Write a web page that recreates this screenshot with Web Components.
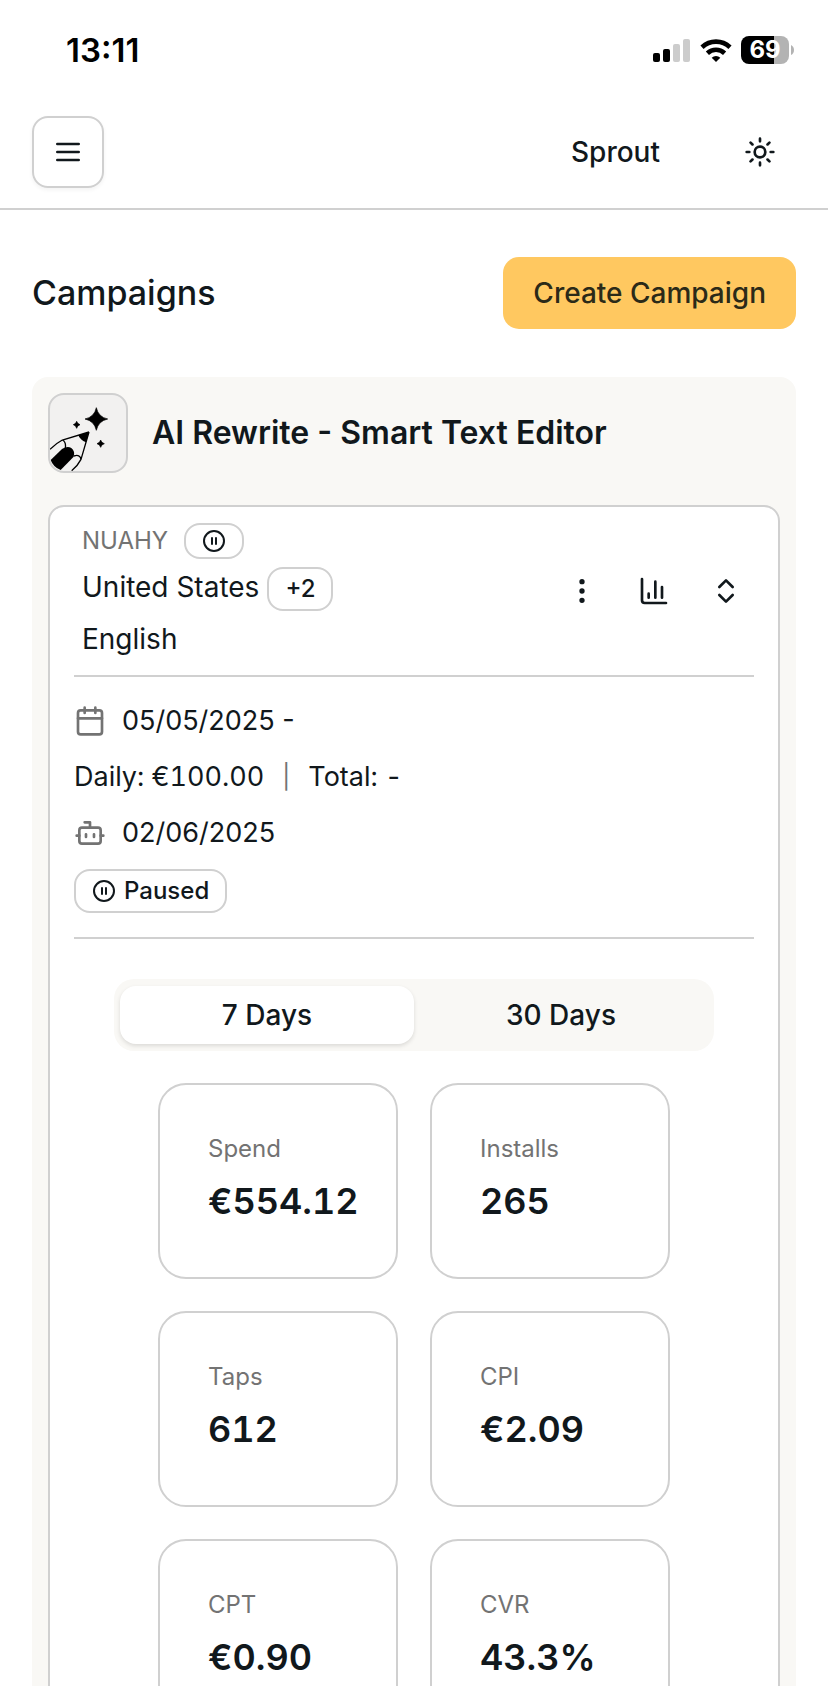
<!DOCTYPE html>
<html lang="en">
<head>
<meta charset="utf-8">
<meta name="viewport" content="width=device-width, initial-scale=1">
<title>Campaigns</title>
<style>
  :root {
    --ink: #11181c;
    --muted: #737373;
    --line: #d0d0d0;
    --panel: #f9f8f5;
    --accent: #ffc860;
  }
  html, body { height: 100%; }
  body {
    margin: 0;
    background: #fff;
    color: var(--ink);
    font: 400 28px/40px Inter, "Liberation Sans", sans-serif;
  }
</style>
</head>
<body>
<app-shell>
  <status-bar slot="top" time="13:11" battery="69"></status-bar>
  <app-header slot="top" workspace="Sprout"></app-header>
  <page-title>Campaigns<span slot="action">Create Campaign</span></page-title>
  <app-group name="AI Rewrite - Smart Text Editor">
    <campaign-card>
      <campaign-summary code="NUAHY" country="United States" more="+2" language="English"></campaign-summary>
      <campaign-details></campaign-details>
      <range-tabs></range-tabs>
      <metric-grid>
        <metric-card label="Spend">€554.12</metric-card>
        <metric-card label="Installs">265</metric-card>
        <metric-card label="Taps">612</metric-card>
        <metric-card label="CPI">€2.09</metric-card>
        <metric-card label="CPT">€0.90</metric-card>
        <metric-card label="CVR">43.3%</metric-card>
      </metric-grid>
    </campaign-card>
  </app-group>
</app-shell>

<script>
const base = `
  :host, *, *::before, *::after { box-sizing: border-box; }
  button { margin: 0; padding: 0; border: 0; background: none; color: inherit; font: inherit; cursor: pointer; }
`;

function define(name, render) {
  customElements.define(name, class extends HTMLElement {
    constructor() {
      super();
      this.attachShadow({ mode: 'open' });
    }
    connectedCallback() {
      const t = document.createElement('template');
      t.innerHTML = `<style>${base}</style>` + render(this);
      this.shadowRoot.replaceChildren(t.content.cloneNode(true));
    }
  });
}

const glyphs = {
  menu: '<path d="M4 6h16M4 12h16M4 18h16"/>',
  sun: '<circle cx="12" cy="12" r="4"/><path d="M12 2v2M12 20v2M4.93 4.93l1.41 1.41M17.66 17.66l1.41 1.41M2 12h2M20 12h2M6.34 17.66l-1.41 1.41M19.07 4.93l-1.41 1.41"/>',
  pause: '<circle cx="12" cy="12" r="10"/><path d="M10 15V9M14 15V9"/>',
  more: '<circle cx="12" cy="12" r="1"/><circle cx="12" cy="5" r="1"/><circle cx="12" cy="19" r="1"/>',
  chart: '<path d="M3 3v16a2 2 0 0 0 2 2h16M18 17V9M13 17V5M8 17v-3"/>',
  updown: '<path d="m7 15 5 5 5-5M7 9l5-5 5 5"/>',
  calendar: '<path d="M8 2v4M16 2v4M3 10h18"/><rect width="18" height="18" x="3" y="4" rx="2"/>',
  bot: '<path d="M12 8V4H8M2 14h2M20 14h2M15 13v2M9 13v2"/><rect width="16" height="12" x="4" y="8" rx="2"/>'
};

define('ui-icon', el => `
  <style>
    :host { display: block; flex: none; width: 32px; height: 32px; }
    :host([small]) { width: 24px; height: 24px; }
    svg { display: block; width: 100%; height: 100%; }
  </style>
  <svg viewBox="0 0 24 24" fill="none" stroke="currentColor" stroke-width="2" stroke-linecap="round" stroke-linejoin="round" aria-hidden="true">${glyphs[el.getAttribute('name')]}</svg>
`);

define('ui-badge', () => `
  <style>
    :host {
      display: inline-flex; align-items: center; justify-content: center; gap: 8px;
      height: 44px; padding: 0 16px; border: 2px solid var(--line); border-radius: 16px;
      font-size: 24px; font-weight: 500; line-height: 40px;
    }
    :host([compact]) { height: 36px; }
  </style>
  <slot></slot>
`);

define('status-bar', el => `
  <style>
    :host {
      display: flex; align-items: center; justify-content: space-between;
      height: 96px; padding: 4px 34px 0 66px; color: #000;
    }
    time { font-size: 33px; font-weight: 600; }
    .status { display: flex; align-items: center; gap: 8px; }
    svg { display: block; }
    .battery { display: flex; align-items: center; gap: 2px; }
    .level {
      display: grid; place-items: center; width: 48px; height: 28px; border-radius: 8px;
      background: linear-gradient(90deg, #000 69%, #b3b3b3 69%);
      color: #fff; font-size: 24px; font-weight: 700; line-height: 28px;
    }
  </style>
  <time>${el.getAttribute('time')}</time>
  <div class="status">
    <svg width="38" height="24" viewBox="0 0 38 24" aria-hidden="true">
      <rect x="0" y="15" width="7" height="9" rx="2"/>
      <rect x="10" y="11" width="7" height="13" rx="2"/>
      <rect x="20" y="6" width="7" height="18" rx="2" fill="#ccc"/>
      <rect x="30" y="1" width="7" height="23" rx="2" fill="#ccc"/>
    </svg>
    <svg width="34" height="24" viewBox="0 0 34 24" fill="none" stroke="#000" stroke-width="4.6" aria-hidden="true">
      <path d="M3 9.2a20.5 20.5 0 0 1 28 0"/>
      <path d="M8.4 15.2a12.6 12.6 0 0 1 17.2 0"/>
      <path d="M17 24l-4.3-4.3a6.2 6.2 0 0 1 8.6 0z" fill="#000" stroke="none"/>
    </svg>
    <div class="battery">
      <span class="level">${el.getAttribute('battery')}</span>
      <svg width="3" height="10" viewBox="0 0 3 10" fill="#b3b3b3" aria-hidden="true"><path d="M0 0q3 1.5 3 5t-3 5z"/></svg>
    </div>
  </div>
`);

define('app-header', el => `
  <style>
    :host {
      display: flex; align-items: center; justify-content: space-between;
      padding: 20px 32px; border-bottom: 2px solid var(--line);
    }
    button { display: grid; place-items: center; height: 72px; }
    .menu { width: 72px; border: 2px solid var(--line); border-radius: 16px; box-shadow: 0 2px 4px #0000000d; }
    .side { display: flex; align-items: center; gap: 32px; }
    .workspace { padding: 0 32px; font-weight: 500; }
    .theme { width: 72px; }
  </style>
  <button class="menu" aria-label="Open menu"><ui-icon name="menu"></ui-icon></button>
  <div class="side">
    <button class="workspace">${el.getAttribute('workspace')}</button>
    <button class="theme" aria-label="Toggle theme"><ui-icon name="sun"></ui-icon></button>
  </div>
`);

define('app-shell', () => `
  <style>
    :host { display: flex; flex-direction: column; height: 100%; }
    main { flex: 1; min-height: 0; overflow-y: auto; scrollbar-width: none; padding: 47px 32px 32px; }
  </style>
  <slot name="top"></slot>
  <main><slot></slot></main>
`);

define('page-title', () => `
  <style>
    :host { display: flex; align-items: center; justify-content: space-between; margin-bottom: 48px; }
    h1 { margin: 0; font-size: 34px; font-weight: 500; line-height: 40px; }
    button { height: 72px; padding: 0 30px; border-radius: 16px; background: var(--accent); color: #2b2a18; font-weight: 500; }
  </style>
  <h1><slot></slot></h1>
  <button><slot name="action"></slot></button>
`);

define('app-group', el => `
  <style>
    :host { display: block; padding: 16px; border-radius: 16px; background: var(--panel); }
    header { display: flex; align-items: center; gap: 24px; margin-bottom: 32px; }
    h2 { margin: 0; font-size: 32px; font-weight: 600; line-height: 40px; }
    .logo { flex: none; width: 80px; height: 80px; border: 2px solid var(--line); border-radius: 16px; overflow: hidden; background: #f2f1f0; }
    svg { display: block; width: 100%; height: 100%; }
  </style>
  <header>
    <div class="logo">
      <svg viewBox="150 495 228 228" aria-hidden="true">
        <path d="M289 533q6 28 34 34q-28 6-34 34q-6-28-34-34q28-6 34-34z" stroke="#000" stroke-width="2"/>
        <path d="M230 574q2 8 10 10q-8 2-10 11q-2-9-10-11q8-2 10-10zM302 630q2 9 11 11q-9 2-11 11q-2-9-11-11q9-2 11-11z" stroke="#000" stroke-width="2"/>
        <path d="M267 606L187 630Q168 640 150 658M267 606L243 688Q234 706 215 722M187 630Q199 636 196 655M222 678Q240 672 243 688" fill="none" stroke="#000" stroke-width="4"/>
        <path d="M267 606L235 616Q240 630 258 637z"/>
        <path d="M152 690L186 657Q202 646 214 654Q226 664 221 680L182 720Q160 712 152 690z"/>
      </svg>
    </div>
    <h2>${el.getAttribute('name')}</h2>
  </header>
  <slot></slot>
`);

define('campaign-card', () => `
  <style>
    :host { display: block; padding: 16px 24px 40px; border: 2px solid var(--line); border-radius: 16px; background: #fff; }
  </style>
  <slot></slot>
`);

define('campaign-summary', el => `
  <style>
    :host { display: flex; align-items: center; justify-content: space-between; padding-bottom: 16px; border-bottom: 2px solid var(--line); }
    .info { display: grid; gap: 8px; padding-left: 8px; }
    .code { display: flex; align-items: center; gap: 16px; color: var(--muted); font-size: 24px; line-height: 36px; }
    .code ui-badge { color: var(--ink); }
    .country { display: flex; align-items: baseline; gap: 8px; height: 44px; }
    .actions { display: flex; gap: 16px; }
    button { display: grid; place-items: center; width: 56px; height: 56px; }
  </style>
  <div class="info">
    <div class="code">${el.getAttribute('code')}<ui-badge compact><ui-icon small name="pause"></ui-icon></ui-badge></div>
    <div class="country">${el.getAttribute('country')}<ui-badge>${el.getAttribute('more')}</ui-badge></div>
    <div>${el.getAttribute('language')}</div>
  </div>
  <div class="actions">
    <button aria-label="More actions"><ui-icon name="more"></ui-icon></button>
    <button aria-label="Charts"><ui-icon name="chart"></ui-icon></button>
    <button aria-label="Expand"><ui-icon name="updown"></ui-icon></button>
  </div>
`);

define('campaign-details', () => `
  <style>
    :host { display: grid; justify-items: start; gap: 16px; padding: 24px 0; border-bottom: 2px solid var(--line); }
    .row { display: flex; align-items: center; gap: 16px; font-size: 27px; }
    .budget { gap: 18px; font-variant-numeric: tabular-nums; }
    .row ui-icon, .bar { color: var(--muted); }
    .bar { font-size: 24px; }
  </style>
  <div class="row"><ui-icon name="calendar"></ui-icon>05/05/2025 -</div>
  <div class="row budget"><span>Daily: €100.00</span><span class="bar">|</span><span>Total: -</span></div>
  <div class="row"><ui-icon name="bot"></ui-icon>02/06/2025</div>
  <ui-badge><ui-icon small name="pause"></ui-icon>Paused</ui-badge>
`);

define('range-tabs', () => `
  <style>
    :host { display: block; max-width: 600px; margin: 40px auto 32px; }
    .tabs { display: grid; grid-template-columns: 1fr 1fr; height: 72px; padding: 7px 6px; border-radius: 20px; background: var(--panel); }
    button { border-radius: 16px; font-weight: 500; }
    [aria-selected="true"] { background: #fff; box-shadow: 0 2px 4px #0000001f; }
  </style>
  <div class="tabs" role="tablist">
    <button role="tab" aria-selected="true">7 Days</button>
    <button role="tab" aria-selected="false">30 Days</button>
  </div>
`);

define('metric-grid', () => `
  <style>
    :host { display: grid; grid-template-columns: repeat(2, 240px); justify-content: center; gap: 32px; }
  </style>
  <slot></slot>
`);

define('metric-card', el => `
  <style>
    :host { display: grid; gap: 16px; padding: 48px 0 56px 48px; border: 2px solid var(--line); border-radius: 28px; }
    .label { color: var(--muted); font-size: 24px; line-height: 32px; }
    .value { font-size: 36px; font-weight: 600; line-height: 40px; font-variant-numeric: tabular-nums; }
  </style>
  <div class="label">${el.getAttribute('label')}</div>
  <div class="value"><slot></slot></div>
`);
</script>
</body>
</html>
